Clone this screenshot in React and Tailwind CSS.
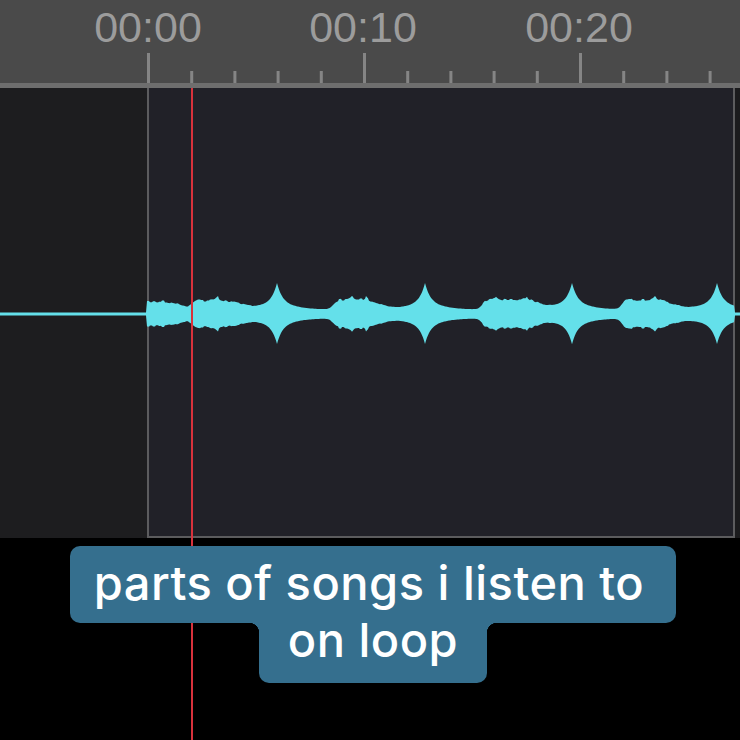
import React from 'react'

const TICK_START = 147
const TICK_STEP = 43.2
const labels = [
  { text: '00:00', cls: 'left-[88px]' },
  { text: '00:10', cls: 'left-[303px]' },
  { text: '00:20', cls: 'left-[519px]' },
]

function hash(n) {
  const s = Math.sin(n * 127.1 + 311.7) * 43758.5453
  return s - Math.floor(s)
}

const sig = (v) => 1 / (1 + Math.exp(-v))

function amp(x) {
  if (x < 147 || x > 734) return 1.6
  let a = 4
  for (const c of [277, 425, 572, 717]) {
    const d = Math.abs(x - c)
    a += 10 * Math.exp(-d / 18) + 17 * Math.exp(-d / 5)
  }
  const plateaus = [[140, 182, 9], [192, 242, 9], [333, 380, 10], [482, 540, 10], [622, 674, 10]]
  let p = 0
  for (const [s, e, h] of plateaus) {
    p += h * sig((x - s) / 2) * sig((e - x) / 7)
  }
  a += p
  for (const c of [218, 352, 366, 496, 527, 655]) {
    a += 4 * Math.exp(-Math.abs(x - c) / 3)
  }
  a += (p / 10) * (hash(Math.floor(x / 3)) * 2.6 - 1.3)
  return a
}

function wavePath(cy) {
  const top = []
  const bottom = []
  for (let x = 0; x <= 740; x += 1) {
    const a = amp(x)
    top.push(`${x},${(cy - a).toFixed(1)}`)
    bottom.push(`${x},${(cy + a * 0.97).toFixed(1)}`)
  }
  return 'M' + top.join(' L') + ' L' + bottom.reverse().join(' L') + ' Z'
}

function Ruler() {
  const ticks = []
  for (let k = 0; k <= 13; k++) {
    const x = TICK_START + k * TICK_STEP
    const major = k % 5 === 0
    ticks.push(<rect key={k} x={x} y={major ? 53 : 71} width="3" height={major ? 30 : 12} fill="#858585" />)
  }
  return (
    <div className="relative h-[88px] shrink-0 bg-[#4a4a4a]">
      {labels.map((l) => (
        <div
          key={l.text}
          className={`absolute top-[6px] w-[120px] text-center text-[43px] leading-none text-[#9c9c9c] ${l.cls}`}
          style={{ fontFamily: '"Liberation Sans", Arial, sans-serif' }}
        >
          {l.text}
        </div>
      ))}
      <svg className="absolute inset-0" width="740" height="88">
        {ticks}
        <rect x="0" y="83" width="740" height="5" fill="#6e6e6e" />
      </svg>
    </div>
  )
}

export default function App() {
  return (
    <div className="relative w-[740px] h-[740px] overflow-hidden bg-black flex flex-col">
      <Ruler />

      {/* track */}
      <div className="relative h-[450px] shrink-0 flex">
        <div className="w-[147px] bg-[#1d1d1f]" />
        <div className="flex-1 border-2 border-t-0 border-[#5c5c5e] bg-[#212128]" />
        <div className="w-[5px] bg-[#1b1b1d]" />
        <svg className="absolute inset-0" width="740" height="450">
          <path d={wavePath(226)} fill="#64e0ea" />
        </svg>
      </div>

      {/* caption */}
      <div className="relative z-10 flex flex-col items-center mt-[8px] pl-[6px] text-white font-medium text-[47px] tracking-[0.5px]"
           style={{ fontFamily: 'Inter, "Noto Sans", sans-serif' }}>
        <div className="h-[77px] w-[606px] rounded-[10px] bg-[#356f8e] pt-[8px] pr-[8px] text-center leading-[57px] whitespace-nowrap">
          parts of songs i listen to
        </div>
        <div className="relative h-[60px] w-[228px] rounded-b-[10px] bg-[#356f8e] text-center leading-[33px]">
          <span className="absolute left-[-10px] top-0 h-[10px] w-[10px] bg-[radial-gradient(circle_at_0_100%,transparent_10px,#356f8e_10.5px)]" />
          <span className="absolute right-[-10px] top-0 h-[10px] w-[10px] bg-[radial-gradient(circle_at_100%_100%,transparent_10px,#356f8e_10.5px)]" />
          on loop
        </div>
      </div>

      {/* playhead */}
      <div className="absolute left-[191px] top-[88px] bottom-0 w-[2px] bg-[#d8323c]" />
    </div>
  )
}
